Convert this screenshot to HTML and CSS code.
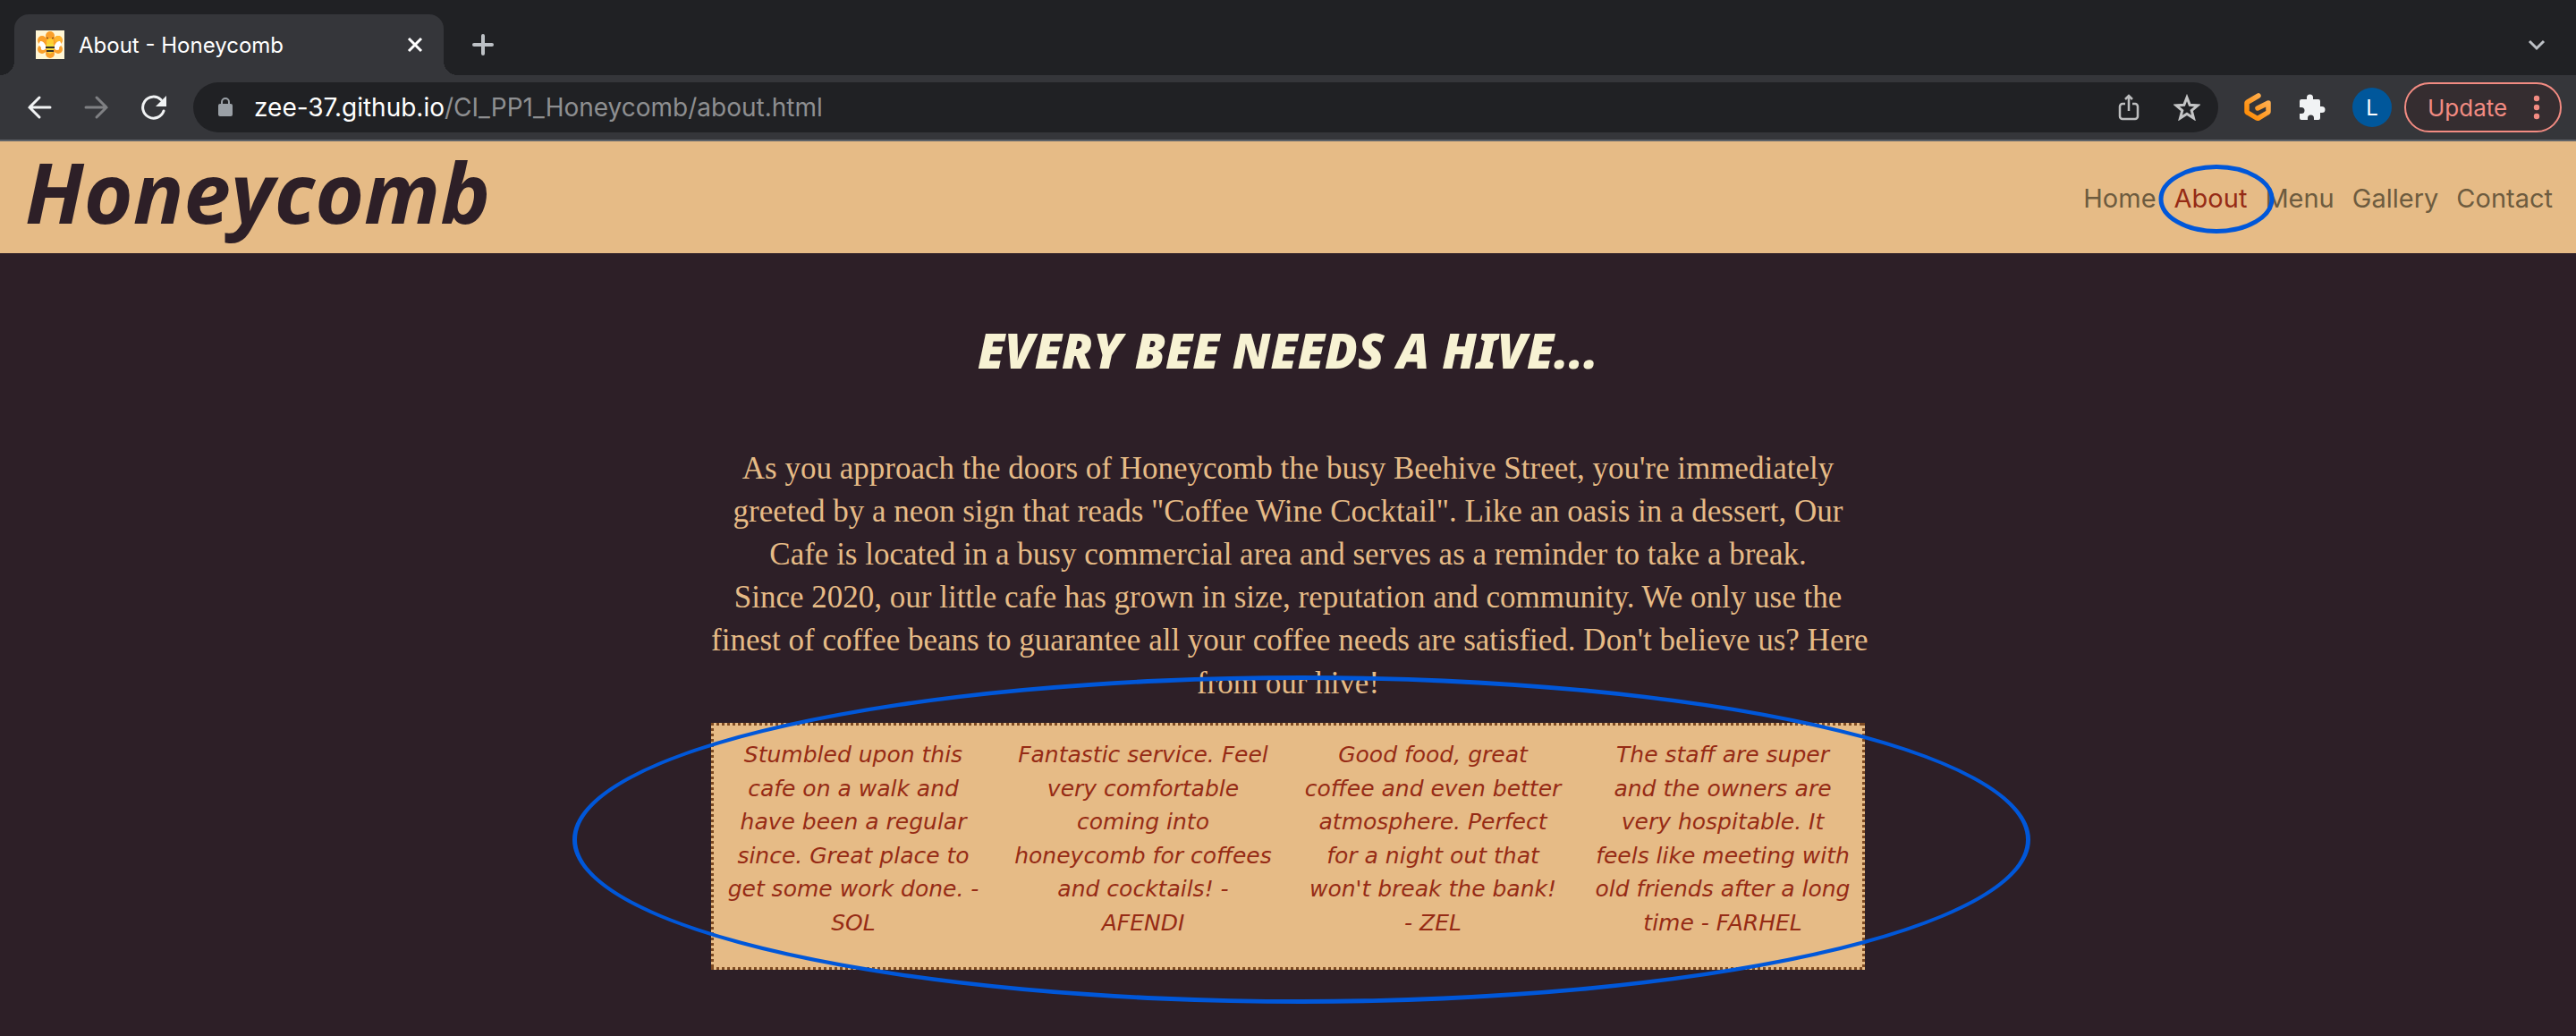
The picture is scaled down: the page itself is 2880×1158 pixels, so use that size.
FILE: index.html
```
<!DOCTYPE html>
<html lang="en">
<head>
<meta charset="utf-8">
<title>About - Honeycomb</title>
<link rel="stylesheet" href="styles.css">
</head>
<body>
<div class="browser">
  <div class="tab-strip">
    <div class="tab">
      <svg class="favicon" viewBox="0 0 32 32" aria-hidden="true">
        <rect width="32" height="32" fill="#fff6d5"/>
        <g fill="#fa9f2a"><circle cx="16" cy="6" r="5"/><circle cx="7" cy="11" r="5"/><circle cx="25" cy="11" r="5"/><circle cx="7" cy="21" r="5"/><circle cx="25" cy="21" r="5"/><circle cx="16" cy="26" r="5"/><path d="M8 8h16v16H8z"/></g>
        <circle cx="25" cy="10" r="4" fill="#ffb52e"/>
        <path d="M5 12q4-1 7 7-1 3-4 3-3 0-2-3-4-3-1-7zM27 12q-4-1-7 7 1 3 4 3 3 0 2-3 4-3 1-7z" fill="#fff"/>
        <circle cx="16" cy="13" r="4" fill="#ffcf33"/>
        <path d="M12 15h8v8q-1 2-4 3-3-1-4-3z" fill="#f5dc3c"/>
        <path d="M11 18h10v2H11zM12 22h8v2h-8z" fill="#33302c"/>
        <path d="M12 8l2 1M20 8l-2 1" stroke="#5a3a10"/>
      </svg>
      <span class="tab-title">About - Honeycomb</span>
      <button class="icon-button tab-close" aria-label="Close tab"><svg width="20" height="20" viewBox="0 0 20 20"><path d="M3 3l14 14M17 3L3 17" stroke="#fff" stroke-width="3" fill="none"/></svg></button>
    </div>
    <button class="icon-button" aria-label="New tab"><svg width="24" height="24" viewBox="0 0 24 24"><path d="M12 2v20M2 12h20" stroke="#bdc1c6" stroke-width="4" stroke-linecap="round"/></svg></button>
    <button class="icon-button tab-search" aria-label="Search tabs"><svg width="20" height="14" viewBox="0 0 20 14"><path d="M2 3l8 8 8-8" stroke="#bdc1c6" stroke-width="3" fill="none"/></svg></button>
  </div>
  <div class="toolbar">
    <div class="nav-buttons">
      <button class="icon-button" aria-label="Back"><svg width="28" height="28" viewBox="0 0 28 28"><path d="M26 14H3M14 3L3 14l11 11" stroke="#f1f3f4" stroke-width="3" stroke-linecap="round" fill="none"/></svg></button>
      <button class="icon-button" aria-label="Forward"><svg width="28" height="28" viewBox="0 0 28 28"><path d="M2 14h23M14 3l11 11-11 11" stroke="#7f8083" stroke-width="3" stroke-linecap="round" fill="none"/></svg></button>
      <button class="icon-button" aria-label="Reload"><svg width="28" height="28" viewBox="0 0 28 28"><path d="M25 18A12 12 0 1 1 22 5.500" stroke="#f1f3f4" stroke-width="3" stroke-linecap="round" fill="none"/><path d="M28 1v12H16z" fill="#f1f3f4"/></svg></button>
    </div>
    <div class="address">
      <svg width="16" height="22" viewBox="0 0 16 22" aria-hidden="true"><path d="M4 9V5a4 4 0 0 1 8 0v4" stroke="#9aa0a6" stroke-width="2" fill="none"/><rect y="7" width="16" height="14" rx="2" fill="#9aa0a6"/></svg>
      <span class="url"><span class="url-host">zee-37.github.io</span>/CI_PP1_Honeycomb/about.html</span>
      <button class="icon-button" aria-label="Share"><svg width="24" height="30" viewBox="0 0 24 30"><path d="M8 11H5a3 3 0 0 0-3 3v11a3 3 0 0 0 3 3h14a3 3 0 0 0 3-3V14a3 3 0 0 0-3-3h-3M12 19V3M8 6l4-4 4 4" stroke="#bdbebf" stroke-width="2.500" fill="none"/></svg></button>
      <button class="icon-button star" aria-label="Bookmark"><svg width="30" height="30" viewBox="0 0 30 30"><path d="M15 4l3.200 8.300 8.800.6-6.800 5.600 2.300 8.600L15 22.300 7.500 27.100l2.300-8.600L3 12.900l8.800-.6z" stroke="#c4c5c6" stroke-width="3" fill="none"/></svg></button>
    </div>
    <div class="extensions">
      <button class="icon-button" aria-label="Gitpod"><svg width="32" height="34" viewBox="0 0 32 34"><defs><linearGradient id="gp" x1="1" y1="0" x2="0" y2="1"><stop offset="0" stop-color="#ffb45b"/><stop offset="1" stop-color="#ff8a00"/></linearGradient></defs><path d="M17 4L5 11a2 2 0 0 0-1 2v8a2 2 0 0 0 1 2l10 6a2 2 0 0 0 2 0l10-6a2 2 0 0 0 1-2v-9L16 18" stroke="url(#gp)" stroke-width="5.500" stroke-linecap="round" stroke-linejoin="round" fill="none"/></svg></button>
      <button class="icon-button" aria-label="Extensions"><svg width="30" height="30" viewBox="0 0 30 30"><path d="M9 6V4a3.500 3.500 0 0 1 7 0v2h6q2 0 2 2v6h2a3.500 3.500 0 0 1 0 7h-2v6q0 2-2 2h-5v-2a3.500 3.500 0 0 0-7 0v2H3q-2 0-2-2v-5h2a3.500 3.500 0 0 0 0-7H1V8q0-2 2-2z" fill="#f1f3f4"/></svg></button>
      <button class="avatar" aria-label="Profile">L</button>
    </div>
    <button class="update">Update <svg width="8" height="28" viewBox="0 0 8 28" aria-hidden="true"><g fill="#f28b82"><circle cx="4" cy="4" r="3.200"/><circle cx="4" cy="14" r="3.200"/><circle cx="4" cy="24" r="3.200"/></g></svg></button>
  </div>
</div>
<header class="site-header">
  <a class="brand" href="#">Honeycomb</a>
  <nav class="site-nav">
    <a href="#">Home</a>
    <a class="active" href="#" aria-current="page">About<svg class="ring ring-nav" aria-hidden="true"><ellipse cx="50%" cy="50%" rx="62" ry="36"/></svg></a>
    <a href="#">Menu</a>
    <a href="#">Gallery</a>
    <a href="#">Contact</a>
  </nav>
</header>
<main class="about">
  <h1>EVERY BEE NEEDS A HIVE...</h1>
  <p class="story">As you approach the doors of Honeycomb the busy Beehive Street, you're immediately<br>greeted by a neon sign that reads "Coffee Wine Cocktail". Like an oasis in a dessert, Our<br>Cafe is located in a busy commercial area and serves as a reminder to take a break.<br>Since 2020, our little cafe has grown in size, reputation and community. We only use the<br>finest of coffee beans to guarantee all your coffee needs are satisfied. Don't believe us? Here<br>from our hive!</p>
  <section class="reviews" aria-label="Reviews">
    <p>Stumbled upon this<br>cafe on a walk and<br>have been a regular<br>since. Great place to<br>get some work done. -<br>SOL</p>
    <p>Fantastic service. Feel<br>very comfortable<br>coming into<br>honeycomb for coffees<br>and cocktails! -<br>AFENDI</p>
    <p>Good food, great<br>coffee and even better<br>atmosphere. Perfect<br>for a night out that<br>won't break the bank!<br>- ZEL</p>
    <p>The staff are super<br>and the owners are<br>very hospitable. It<br>feels like meeting with<br>old friends after a long<br>time - FARHEL</p>
    <div class="ring ring-reviews" aria-hidden="true"></div>
  </section>
</main>
</body>
</html>
```
FILE: styles.css
```
* { box-sizing: border-box; }
body {
  margin: 0;
  min-height: 100vh;
  overflow-x: hidden;
  background: #2d1f27;
  font-family: Inter, "Liberation Sans", sans-serif;
}
button { font: inherit; border: 0; padding: 0; background: none; }
svg { display: block; }
a { color: inherit; text-decoration: none; }
.icon-button { display: flex; flex: none; }

.browser { background: #35363a; border-bottom: 2px solid #5f6368; }
.tab-strip {
  display: flex;
  align-items: center;
  height: 84px;
  padding: 16px 34px 0 16px;
  background: #202124;
}
.tab {
  position: relative;
  display: flex;
  align-items: center;
  width: 480px;
  height: 68px;
  margin-right: 32px;
  padding: 0 22px 0 24px;
  border-radius: 16px 16px 0 0;
  background: #35363a;
  color: #fff;
}
.tab::before, .tab::after {
  content: "";
  position: absolute;
  bottom: 0;
  width: 16px;
  height: 16px;
}
.tab::before { right: 100%; background: radial-gradient(circle at 0 0, #202124 16px, #35363a 16px); }
.tab::after { left: 100%; background: radial-gradient(circle at 100% 0, #202124 16px, #35363a 16px); }
.favicon { width: 32px; height: 32px; margin-right: 16px; }
.tab-title { font-size: 24px; }
.tab-close { margin-left: auto; }
.tab-search { margin-left: auto; }

.toolbar {
  display: flex;
  align-items: center;
  height: 72px;
  padding: 0 16px 0 30px;
}
.nav-buttons { display: flex; gap: 36px; margin-right: 30px; }
.address {
  display: flex;
  align-items: center;
  flex: 1;
  height: 56px;
  padding: 0 20px 0 28px;
  border-radius: 28px;
  background: #202124;
}
.url { flex: 1; margin-left: 24px; font-size: 28px; color: #8e8f91; }
.url-host { color: #fff; }
.star { margin-left: 38px; }
.extensions { display: flex; align-items: center; gap: 30px; margin: 0 14px 0 28px; }
.avatar {
  width: 44px;
  height: 44px;
  border-radius: 50%;
  background: #00579b;
  color: #fff;
  font-size: 24px;
}
.update {
  display: flex;
  align-items: center;
  justify-content: space-between;
  width: 176px;
  height: 56px;
  padding: 0 22px 0 24px;
  border: 2px solid #f28b82;
  border-radius: 28px;
  background: #352d30;
  color: #f28b82;
  font-size: 26px;
}

.site-header {
  display: flex;
  justify-content: space-between;
  height: 125px;
  padding: 0 26px 0 28px;
  background: #e6bb86;
}
.brand {
  color: #2d1f27;
  font: italic 700 94px/112px "Open Sans", sans-serif;
}
.site-nav { display: flex; gap: 20px; font-size: 29px; line-height: 128px; color: #6d5b3f; }
.site-nav .active { position: relative; color: #962b15; }
.ring { position: absolute; pointer-events: none; }
.ring-nav { top: 26px; left: -18px; width: 130px; height: 77px; overflow: visible; }
.ring-nav ellipse { fill: none; stroke: #0057d9; stroke-width: 5px; }

.about { width: 1290px; max-width: 100%; margin: 0 auto; text-align: center; }
.about h1 {
  margin: 0;
  padding: 70px 0 71px;
  color: #f7f2d3;
  font: italic 900 54px/76px "Noto Sans", sans-serif;
}
.story {
  margin: 0 0 20px;
  color: #e6bb86;
  font: 35px/48px "Liberation Serif", serif;
  white-space: nowrap;
}
.reviews {
  position: relative;
  display: grid;
  grid-template-columns: repeat(4, 324px);
  justify-content: center;
  padding: 17px 0 34px;
  background:
    repeating-linear-gradient(90deg, #7d4a22 0 3px, transparent 3px 6px) top / 100% 3px no-repeat,
    repeating-linear-gradient(90deg, #7d4a22 0 3px, transparent 3px 6px) bottom / 100% 3px no-repeat,
    repeating-linear-gradient(#7d4a22 0 3px, transparent 3px 6px) left / 3px 100% no-repeat,
    repeating-linear-gradient(#7d4a22 0 3px, transparent 3px 6px) right / 3px 100% no-repeat,
    #e6bb86;
  color: #962b15;
  font: italic 25px/1.5 "DejaVu Sans", sans-serif;
  white-space: nowrap;
}
.reviews p { margin: 0; }
.ring-reviews {
  inset: -53px -185px -38px -155px;
  border: 5px solid #0057d9;
  border-radius: 50%;
}
```
